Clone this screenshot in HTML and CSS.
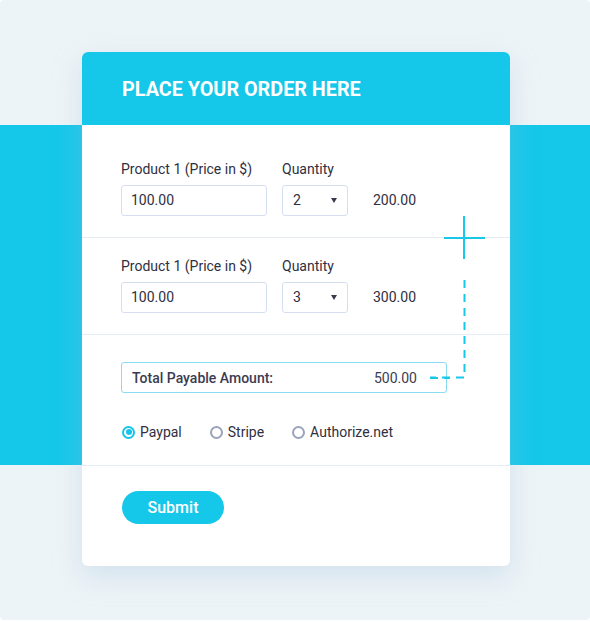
FILE: index.html
```html
<!DOCTYPE html>
<html>
<head>
<meta charset="utf-8">
<link rel="stylesheet" href="styles.css">
</head>
<body>
<div class="page">
  <div class="card">
    <div class="card-head">PLACE YOUR ORDER HERE</div>
    <div class="row row-first">
      <div class="field field-price">
        <div class="label">Product 1 (Price in $)</div>
        <div class="input">100.00</div>
      </div>
      <div class="field field-qty">
        <div class="label">Quantity</div>
        <div class="select"><span>2</span><span class="caret"></span></div>
      </div>
      <div class="amount">200.00</div>
    </div>
    <div class="row">
      <div class="field field-price">
        <div class="label">Product 1 (Price in $)</div>
        <div class="input">100.00</div>
      </div>
      <div class="field field-qty">
        <div class="label">Quantity</div>
        <div class="select"><span>3</span><span class="caret"></span></div>
      </div>
      <div class="amount">300.00</div>
    </div>
    <div class="row row-total">
      <div class="total">
        <span class="total-label">Total Payable Amount:</span>
        <span class="total-value">500.00</span>
      </div>
      <div class="radios">
        <label class="radio"><span class="dot checked"></span>Paypal</label>
        <label class="radio"><span class="dot"></span>Stripe</label>
        <label class="radio"><span class="dot"></span>Authorize.net</label>
      </div>
    </div>
    <div class="row row-submit">
      <button class="submit">Submit</button>
    </div>
    <svg class="deco" width="60" height="180" viewBox="0 0 60 180">
      <path d="M20 0 V43 M0 22 H41" stroke="#17c8e9" stroke-width="2" fill="none"/>
      <path d="M20.5 64 V161.5 H-14" stroke="#17c8e9" stroke-width="2" fill="none" stroke-dasharray="8 6"/>
    </svg>
    <svg class="deco-left" width="20" height="4" viewBox="0 0 20 4">
      <path d="M0 2 H20" stroke="#17c8e9" stroke-width="2" fill="none" stroke-dasharray="8 6"/>
    </svg>
  </div>
</div>
</body>
</html>
```
FILE: styles.css
```css
* { box-sizing: border-box; }
html, body { margin: 0; padding: 0; background: #ffffff; }
body {
  font-family: Roboto, "Liberation Sans", Arial, sans-serif;
  color: #2f2f3f;
  width: 590px;
  height: 622px;
  overflow: hidden;
}
.page {
  width: 590px;
  height: 620px;
  border-radius: 4px;
  padding: 52px 0 0 82px;
  background: linear-gradient(to bottom, #edf4f7 0, #edf4f7 125px, #15c7e9 125px, #15c7e9 465px, #edf4f7 465px);
}
.card {
  position: relative;
  width: 428px;
  height: 514px;
  background: #ffffff;
  border-radius: 6px;
  box-shadow: 0 10px 28px rgba(160, 190, 220, 0.35);
}
.card-head {
  height: 73px;
  background: #15c7e9;
  border-radius: 6px 6px 0 0;
  color: #ffffff;
  font-size: 19.8px;
  font-weight: 700;
  padding: 26px 0 0 40px;
  line-height: 24px;
}
.row {
  display: flex;
  align-items: flex-end;
  padding: 18px 0 21px 39px;
  border-bottom: 1px solid #e7ebf3;
}
.row-first { padding-top: 34px; }
.field { display: flex; flex-direction: column; }
.field-price { width: 146px; margin-right: 15px; }
.field-qty { width: 66px; margin-right: 25px; }
.label {
  font-size: 14px;
  line-height: 20px;
  height: 20px;
  margin-bottom: 6px;
  color: #2f2f3f;
}
.input, .select {
  height: 31px;
  border: 1px solid #d6dff0;
  border-radius: 3px;
  font-size: 14px;
  line-height: 29px;
  padding-left: 9px;
  color: #2f2f3f;
}
.select {
  display: flex;
  justify-content: space-between;
  align-items: center;
  padding-right: 10px;
  padding-left: 10px;
}
.caret {
  width: 0; height: 0;
  border-left: 3.5px solid transparent;
  border-right: 3.5px solid transparent;
  border-top: 5px solid #3a3a4a;
}
.amount {
  font-size: 14px;
  line-height: 31px;
  height: 31px;
  color: #2f2f3f;
}
.row-total {
  flex-direction: column;
  align-items: flex-start;
  padding-top: 27px;
  padding-bottom: 23px;
}
.total {
  width: 326px;
  height: 31px;
  border: 1px solid #88def0;
  border-radius: 3px;
  display: flex;
  justify-content: space-between;
  align-items: center;
  padding: 0 29px 0 10px;
  font-size: 14px;
  color: #3b3b52;
}
.total-label { font-weight: 500; }
.radios {
  display: flex;
  margin-top: 29px;
  font-size: 14px;
  line-height: 20px;
  color: #2f2f3f;
}
.radio { display: flex; align-items: center; margin-right: 27px; }
.dot {
  width: 13px; height: 13px;
  border-radius: 50%;
  border: 2px solid #9aa3bb;
  margin: 0 5px 0 1px;
  position: relative;
}
.dot.checked { border-color: #17c3e6; }
.dot.checked::after {
  content: "";
  position: absolute;
  left: 1.5px; top: 1.5px;
  width: 6px; height: 6px;
  border-radius: 50%;
  background: #17c3e6;
}
.row-submit {
  border-bottom: none;
  padding-top: 25px;
  padding-left: 40px;
}
.submit {
  width: 102px;
  height: 33px;
  border: none;
  border-radius: 17px;
  background: #15c7e9;
  color: #ffffff;
  font-family: Roboto, "Liberation Sans", Arial, sans-serif;
  font-size: 16px;
  font-weight: 500;
  padding: 0;
}
.deco {
  position: absolute;
  left: 362px;
  top: 164px;
  overflow: visible;
}
.deco-left {
  position: absolute;
  left: 348px;
  top: 324px;
}
```
